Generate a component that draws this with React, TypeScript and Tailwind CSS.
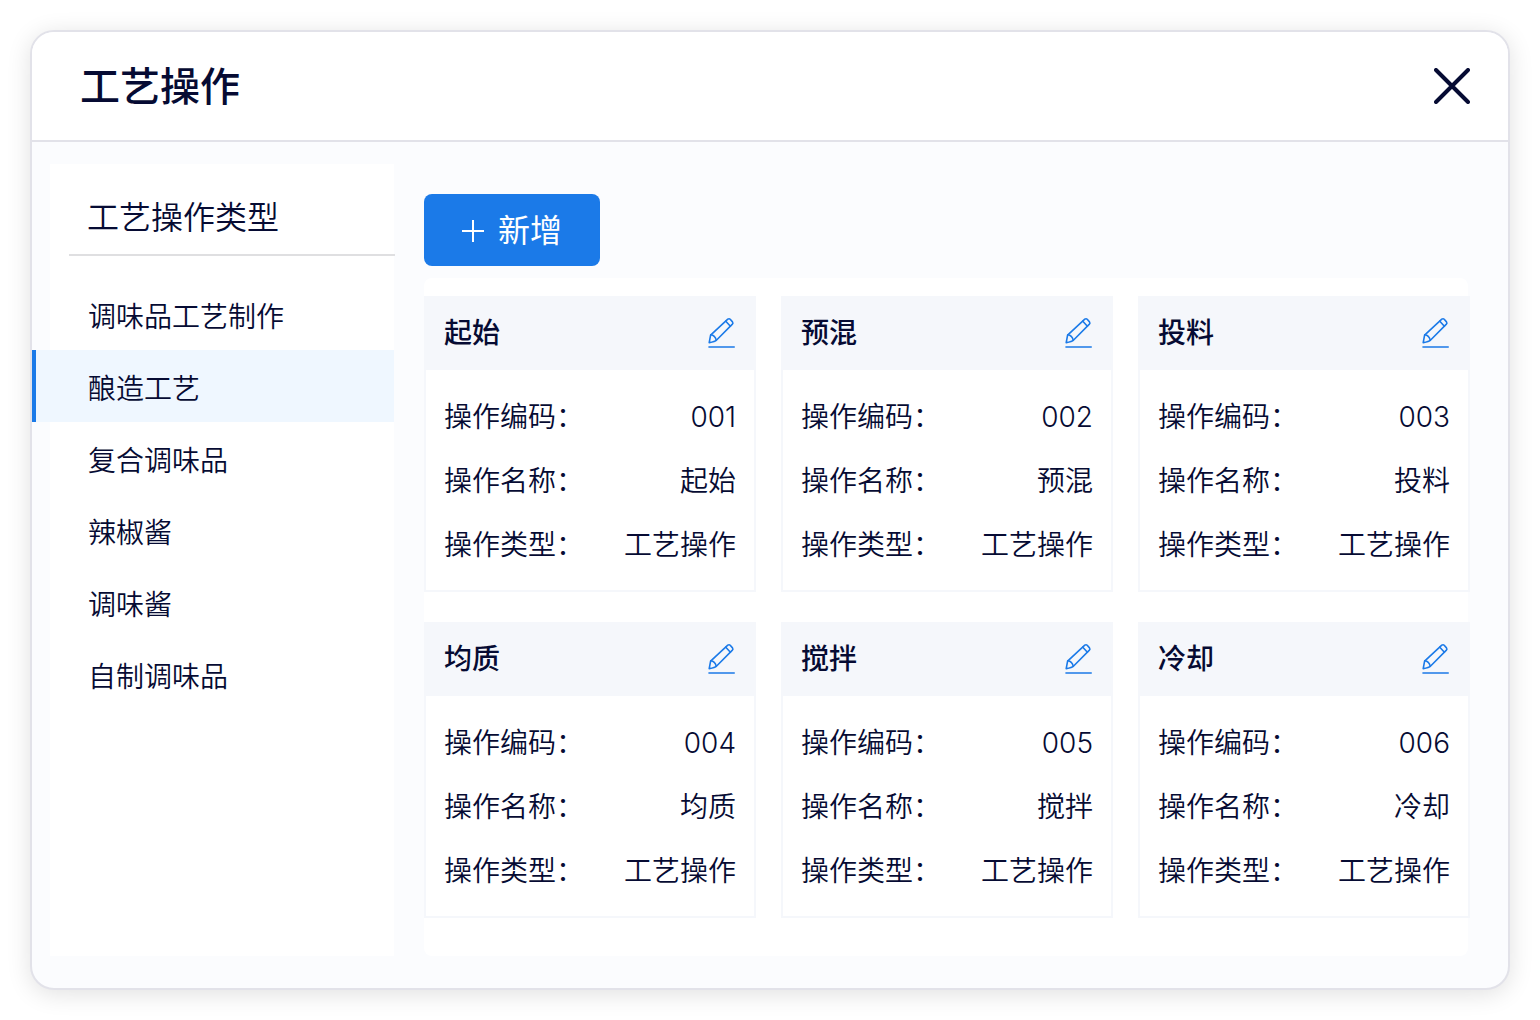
import { useState } from "react";

const categories = ["调味品工艺制作", "酿造工艺", "复合调味品", "辣椒酱", "调味酱", "自制调味品"];

const operations = [
  { code: "001", name: "起始", type: "工艺操作" },
  { code: "002", name: "预混", type: "工艺操作" },
  { code: "003", name: "投料", type: "工艺操作" },
  { code: "004", name: "均质", type: "工艺操作" },
  { code: "005", name: "搅拌", type: "工艺操作" },
  { code: "006", name: "冷却", type: "工艺操作" },
];

function CloseIcon() {
  return (
    <svg width="36" height="36" viewBox="0 0 36 36" fill="none" stroke="currentColor" strokeWidth="4" strokeLinecap="round" aria-hidden="true">
      <path d="M2 2 34 34M34 2 2 34" />
    </svg>
  );
}

function PlusIcon() {
  return (
    <svg width="22" height="22" viewBox="0 0 22 22" fill="none" stroke="currentColor" strokeWidth="2" aria-hidden="true">
      <path d="M11 0V22M0 11H22" />
    </svg>
  );
}

function EditIcon() {
  return (
    <svg width="28" height="32" viewBox="0 0 28 32" fill="none" stroke="currentColor" strokeWidth="1.6" strokeLinecap="round" strokeLinejoin="round" aria-hidden="true">
      <path d="M1.2 25.6 2.6 18.2 19.8 2.2Q21.1 1.2 22.2 2.3L24.5 4.9Q25.4 6 24.4 7.1L8.4 23.2Q7.2 24.6 1.2 25.6Z" />
      <path d="M17.8 4.2 22.4 9.2M2.8 17.8Q7 18.4 8.2 23" />
      <path d="M1 30H26.2" />
    </svg>
  );
}

function Field({ label, value }: { label: string; value: string }) {
  return (
    <div className="flex h-16 items-center justify-between pt-0.5">
      <dt>{label}：</dt>
      <dd>{value}</dd>
    </div>
  );
}

function OperationCard({ code, name, type }: { code: string; name: string; type: string }) {
  return (
    <article className="border-2 border-t-0 border-[#f5f7fb] bg-white">
      <header className="flex h-[74px] items-center justify-between bg-[#f5f7fb] px-[18px]">
        <h3 className="font-medium">{name}</h3>
        <button type="button" aria-label={`编辑${name}`} className="cursor-pointer text-[#1b7ae8]">
          <EditIcon />
        </button>
      </header>
      <dl className="px-[18px] py-[14px]">
        <Field label="操作编码" value={code} />
        <Field label="操作名称" value={name} />
        <Field label="操作类型" value={type} />
      </dl>
    </article>
  );
}

export default function App() {
  const [active, setActive] = useState("酿造工艺");

  return (
    <div className="flex min-h-screen bg-white p-[30px] font-[Inter,'Noto_Sans_CJK_SC',sans-serif] text-[28px] leading-10 font-[350] text-[#060b33]">
      <section className="flex flex-1 flex-col rounded-3xl border-2 border-[#e2e2e9] bg-[#fbfcfe] shadow-[0_4px_24px_rgba(0,0,0,0.12)]">
        <header className="flex h-[110px] items-center justify-between rounded-t-[22px] border-b-2 border-[#e2e2e9] bg-white pr-[38px] pl-12">
          <h1 className="pt-0.5 text-[40px] font-medium">工艺操作</h1>
          <button type="button" aria-label="关闭" className="cursor-pointer">
            <CloseIcon />
          </button>
        </header>

        <div className="flex flex-1 gap-[30px] pt-[22px] pr-10 pb-8 pl-[18px]">
          <aside className="w-[344px] shrink-0 bg-white">
            <h2 className="-mr-px ml-[19px] flex h-[92px] items-center border-b-2 border-[#dfdfe1] pt-[18px] pl-[18px] text-[32px]">
              工艺操作类型
            </h2>
            <nav className="-ml-[18px] pt-[22px]">
              {categories.map((category) => (
                <button
                  key={category}
                  type="button"
                  aria-pressed={category === active}
                  onClick={() => setActive(category)}
                  className={`flex h-[72px] w-full cursor-pointer items-center border-l-4 pt-1.5 pl-[52px] text-left ${
                    category === active ? "border-[#1b7ae8] bg-[#eff7ff]" : "border-transparent"
                  }`}
                >
                  {category}
                </button>
              ))}
            </nav>
          </aside>

          <main className="flex min-w-0 flex-1 flex-col items-start gap-3 pt-[30px]">
            <button
              type="button"
              className="flex h-[72px] w-44 cursor-pointer items-center justify-center gap-[14px] rounded-lg bg-[#1b7ae8] pt-0.5 text-[32px] font-normal text-white"
            >
              <PlusIcon />
              新增
            </button>
            <div className="w-full flex-1 rounded-lg bg-white pt-[18px]">
              <div className="-mr-[2px] grid grid-cols-3 gap-x-[25px] gap-y-[30px]">
                {operations.map((operation) => (
                  <OperationCard key={operation.code} {...operation} />
                ))}
              </div>
            </div>
          </main>
        </div>
      </section>
    </div>
  );
}
